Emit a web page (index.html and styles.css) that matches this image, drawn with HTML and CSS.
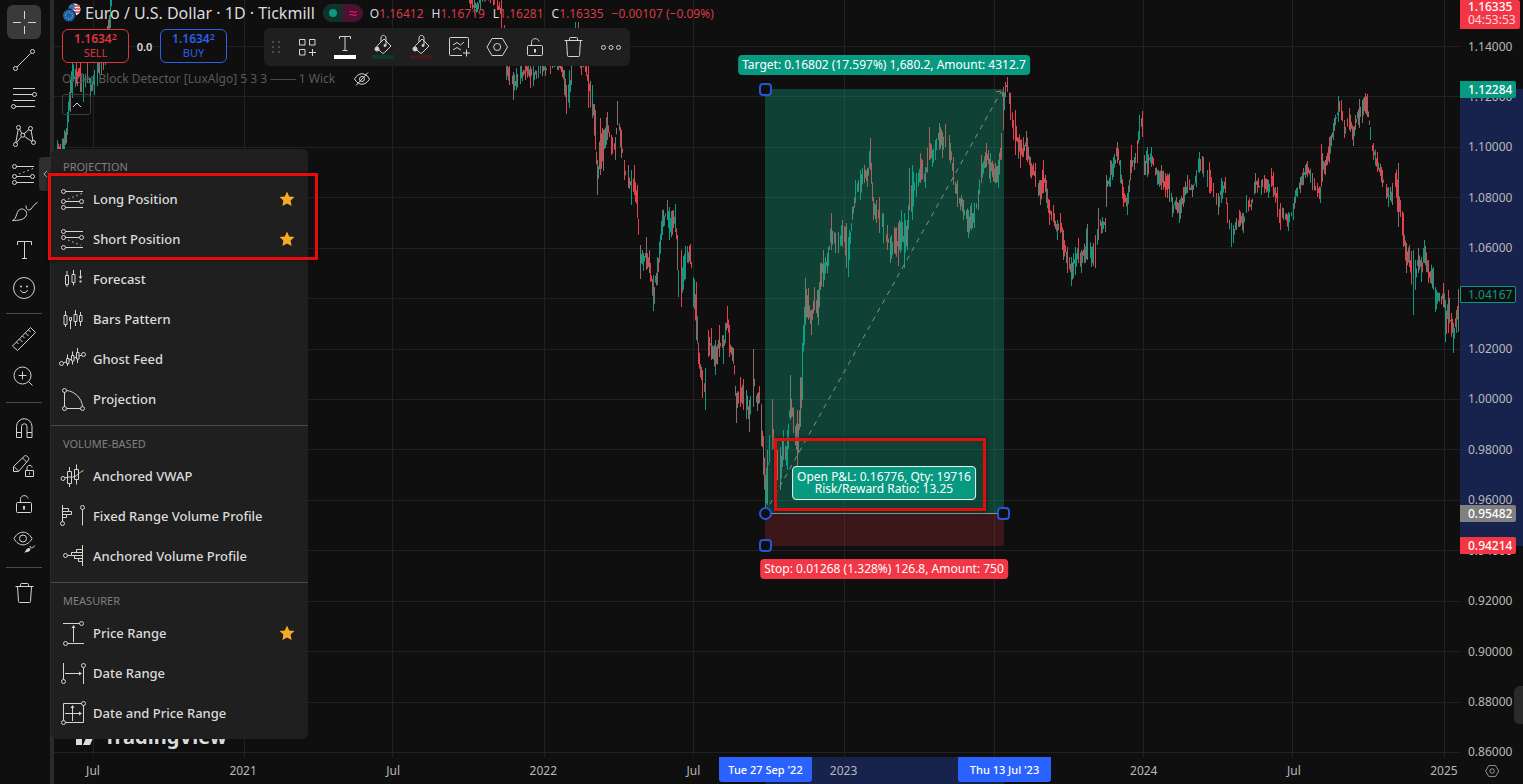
FILE: index.html
```html
<!DOCTYPE html>
<html lang="en">
<head>
  <meta charset="UTF-8" />
  <meta name="viewport" content="width=device-width, initial-scale=1.0"/>
  <title>Euro / U.S. Dollar</title>
  <link rel="stylesheet" href="styles.css">
</head>
<body>
  <nav class="toolbar">
    <button class="tool active" aria-label="Cross">
      <svg class="icon" viewBox="0 0 28 28"><path d="M14.5 3v8M14.5 18v8M3 14.5h8M18 14.5h8"/></svg>
    </button>
    <button class="tool" aria-label="Trend line">
      <svg class="icon" viewBox="0 0 28 28"><path d="M6.9 21.1 20.6 7.4"/><circle cx="5.5" cy="22.5" r="2"/><circle cx="22.5" cy="5.5" r="2"/></svg>
    </button>
    <button class="tool" aria-label="Fib retracement">
      <svg class="icon" viewBox="0 0 28 28"><path d="M3 4.5h22M3 10.5h19.500M3 16.500h22M5.500 22.500h19.500"/><circle cx="24.500" cy="10.500" r="2"/><circle cx="3.500" cy="22.500" r="2"/></svg>
    </button>
    <button class="tool" aria-label="Patterns">
      <svg class="icon" viewBox="0 0 28 28"><path d="M5.800 20.500 8.200 7.500M9.500 7 11.800 11.500M14 11.800 19 7.500M21 8l2 11M22 19.500 14.500 14.500M11.300 14.700 6.500 20.800"/><circle cx="8.500" cy="5.500" r="2"/><circle cx="20.500" cy="6.500" r="2"/><circle cx="12.800" cy="13.200" r="2"/><circle cx="5.500" cy="22.500" r="2"/><circle cx="23.500" cy="20.500" r="2"/></svg>
    </button>
    <button class="tool open" aria-label="Prediction and measurement tools">
      <svg class="icon"><use href="#long"/></svg>
      <span class="tool-arrow"><svg class="arrow" viewBox="0 0 6 10"><path d="M5 1 1 5l4 4"/></svg></span>
    </button>
    <button class="tool" aria-label="Brush">
      <svg class="icon" viewBox="0 0 28 28"><path d="M2.500 22.500c5-1.500 3-10 8.500-11.500 4-.5 7 3.500 5 7-2 4-8 4.500-13.500 4.500z"/><path d="M16 7.500c0 4.500 2.500 5.500 5 3.500 2-2 3-5 6.500-6.500"/></svg>
    </button>
    <button class="tool" aria-label="Text">
      <svg class="icon" viewBox="0 0 28 28"><path d="M7.500 9V5.500h14V9M14.500 5.500v17M12 22.500h5"/></svg>
    </button>
    <button class="tool" aria-label="Icons">
      <svg class="icon" viewBox="0 0 28 28"><circle cx="14" cy="14" r="10.500"/><path d="M10.500 16c1 3.500 6 3.500 7 0"/><circle class="dot" cx="11" cy="12.500" r="1"/><circle class="dot" cx="17" cy="12.500" r="1"/></svg>
    </button>
    <hr>
    <button class="tool" aria-label="Measure">
      <svg class="icon" viewBox="0 0 28 28"><path d="M2.500 21 20.500 2.500 25.500 7.500 7.500 25.500zM6.500 17l2 2M9.500 14l3 3M12.500 11l2 2M15.500 8l3 3M18.500 5l2 2"/></svg>
    </button>
    <button class="tool" aria-label="Zoom in">
      <svg class="icon" viewBox="0 0 28 28"><circle cx="12.500" cy="12.500" r="8.500"/><path d="M12.500 8.500v8M8.500 12.500h8M18.500 18.500l4 4"/></svg>
    </button>
    <hr>
    <button class="tool" aria-label="Magnet">
      <svg class="icon" viewBox="0 0 28 28"><path d="M6.500 23.500v-11a7.700 7.700 0 0 1 15.500 0v11h-5v-11a2.700 2.700 0 0 0-5.500 0v11zM6.500 18.500h5M17 18.500h5"/></svg>
    </button>
    <button class="tool" aria-label="Drawing mode">
      <svg class="icon" viewBox="0 0 28 28"><path d="M3.500 19.500v-5L14.500 4c1.500-1.500 5.500 2 4 4L8.500 19.500zM4 14.500l4.500 4.500M12.500 6l4 4"/><path d="M15.500 18.500h8v6h-8zM17 18.500V16c0-3.500 5-3.500 5-.5M19.500 20.500v2"/></svg>
    </button>
    <button class="tool" aria-label="Lock">
      <svg class="icon"><use href="#lock"/></svg>
    </button>
    <button class="tool" aria-label="Hide drawings">
      <svg class="icon" viewBox="0 0 28 28"><path d="M4 10.500c4.500-8.500 13.500-8.500 18 0-4.500 8.500-13.500 8.500-18 0z"/><circle cx="13" cy="10.500" r="3.500"/><path class="filled" d="M14 24.500c2-1 2-4.500 5-4.500 2.500.5 2 4.500-5 4.500z"/><path d="M20 18c0 3.500 3.500 1.500 5-.5"/></svg>
    </button>
    <hr>
    <button class="tool" aria-label="Remove">
      <svg class="icon"><use href="#trash"/></svg>
    </button>
  </nav>

  <main class="chart">
    <div class="plot">
      <svg class="candles" id="candles" viewBox="54 0 1406 757" preserveAspectRatio="none">
        <g id="grid"></g>
        <g id="bars"></g>
        <rect class="profit" x="765" y="89" width="239" height="424"/>
        <rect class="loss" x="765" y="514" width="239" height="32"/>
        <path class="entry" d="M765 513.500h239"/>
        <path class="trend" d="M765 513 1001 92M1001 91l-6 1M1002 92l1 5"/>
        <g class="handles">
          <rect x="760" y="84" width="11" height="11" rx="3"/>
          <circle cx="765.500" cy="513.500" r="5.500"/>
          <rect x="998" y="508" width="11" height="11" rx="3"/>
          <rect x="760" y="540" width="11" height="11" rx="3"/>
        </g>
      </svg>

      <span class="label target">Target: 0.16802 (17.597%) 1,680.2, Amount: 4312.7</span>
      <span class="label pnl">Open P&amp;L: 0.16776, Qty: 19716<br>Risk/Reward Ratio: 13.25</span>
      <span class="label stop">Stop: 0.01268 (1.328%) 126.8, Amount: 750</span>
      <div class="mark mark-ratio"></div>

      <div class="watermark">
        <svg width="28" height="18" viewBox="0 0 28 18"><path d="M0 1h12v16H6V7H0zM20 1h7l-7 16h-7z"/><circle cx="15.500" cy="4" r="3"/></svg>
        TradingView
      </div>

      <header class="legend">
        <div class="symbol-row">
          <svg class="flags" viewBox="0 0 20 20">
            <circle cx="12.500" cy="6.500" r="6" fill="#e8e8e8"/>
            <path d="M12 3h6M12 6h7M12 9h6" stroke="#d8434c" stroke-width="1.500"/>
            <path d="M6.500 6.500A6 6 0 0 1 12.500.5v6z" fill="#2f6fb5"/>
            <circle cx="7" cy="12.500" r="6.500" fill="#1b5faa" stroke="#0f0f0f"/>
            <circle cx="7" cy="12.500" r="3.500" fill="none" stroke="#d3d9a0" stroke-dasharray="1 1.700"/>
          </svg>
          <h1>Euro / U.S. Dollar · 1D · Tickmill</h1>
          <span class="status"><i class="online"></i><i class="wave">≈</i></span>
          <span class="ohlc"><span>O<b>1.16412</b></span><span>H<b>1.16719</b></span><span>L<b>1.16281</b></span><span>C<b>1.16335</b></span><b>−0.00107 (−0.09%)</b></span>
        </div>
        <div class="trade-row">
          <button class="trade sell"><strong>1.1634<sup>2</sup></strong>SELL</button>
          <span class="spread">0.0</span>
          <button class="trade buy"><strong>1.1634<sup>2</sup></strong>BUY</button>
        </div>
        <div class="study-row">
          Order Block Detector [LuxAlgo] 5 3 3 ─── 1 Wick
          <svg class="eye" viewBox="0 0 18 16"><path d="M1.500 8c4-7 11-7 15 0-4 7-11 7-15 0zM3 14.500 15 1.500"/><circle cx="9" cy="8" r="2.500"/></svg>
        </div>
        <button class="collapse" aria-label="Collapse legend"><svg class="arrow" viewBox="0 0 10 6"><path d="M1 5l4-4 4 4"/></svg></button>
      </header>

      <div class="floatbar">
        <svg class="grip" viewBox="0 0 10 14"><path d="M1 1h2v2H1zM7 1h2v2H7zM1 6h2v2H1zM7 6h2v2H7zM1 11h2v2H1zM7 11h2v2H7z"/></svg>
        <button aria-label="Templates"><svg class="icon" viewBox="0 0 28 28"><path d="M6.500 6.500h5.500v5.500H6.500zM16.500 6.500h5.500v5.500h-5.500zM6.500 16.500h5.500v5.500H6.500zM19.500 16v7M16 19.500h7"/></svg></button>
        <button aria-label="Text colour"><svg class="icon" viewBox="0 0 28 28"><path d="M8.500 6V3.500h11V6M14 3.500v14M11.500 17.500h5"/><path class="swatch" d="M3 22h22v4H3z"/></svg></button>
        <button aria-label="Target colour"><svg class="icon" viewBox="0 0 28 28"><use href="#bucket"/><path d="M3 24h22" stroke="#0b3a33" stroke-width="4"/></svg></button>
        <button aria-label="Stop colour"><svg class="icon" viewBox="0 0 28 28"><use href="#bucket"/><path d="M3 24h22" stroke="#43191e" stroke-width="4"/></svg></button>
        <button aria-label="Create limit order"><svg class="icon" viewBox="0 0 28 28"><path d="M17 22.500H5.500a1 1 0 0 1-1-1v-16a1 1 0 0 1 1-1h17a1 1 0 0 1 1 1V15M8 12l4-2.500 3.500 2.500L19 9M8 17l4-2.500 4 2.500M21.500 16.500v7M18 20h7"/></svg></button>
        <button aria-label="Settings"><svg class="icon"><use href="#hexagon"/></svg></button>
        <button aria-label="Lock"><svg class="icon"><use href="#lock"/></svg></button>
        <button aria-label="Remove"><svg class="icon"><use href="#trash"/></svg></button>
        <button aria-label="More"><svg class="icon" viewBox="0 0 28 28"><circle cx="6.500" cy="14.500" r="2"/><circle cx="14" cy="14.500" r="2"/><circle cx="21.500" cy="14.500" r="2"/></svg></button>
      </div>
    </div>

    <aside class="price-axis">
      <div class="price-range"></div>
      <div class="prices">
        <span>1.14000</span><span>1.12000</span><span>1.10000</span><span>1.08000</span><span>1.06000</span>
        <span></span><span>1.02000</span><span>1.00000</span><span>0.98000</span><span>0.96000</span>
        <span>0.94000</span><span>0.92000</span><span>0.90000</span><span>0.88000</span><span>0.86000</span>
      </div>
      <span class="tag last">1.16335<br><small>04:53:53</small></span>
      <span class="tag high">1.12284</span>
      <span class="tag current">1.04167</span>
      <span class="tag open-price">0.95482</span>
      <span class="tag low">0.94214</span>
      <span class="side-handle"></span>
    </aside>

    <footer class="time-axis">
      <div class="date-range"></div>
      <div class="dates">
        <span>Jul</span><span>2021</span><span>Jul</span><span>2022</span><span>Jul</span>
        <span>2023</span><span></span><span>2024</span><span>Jul</span><span>2025</span>
      </div>
      <span class="date-tag from">Tue 27 Sep '22</span>
      <span class="date-tag to">Thu 13 Jul '23</span>
    </footer>
    <button class="axis-settings" aria-label="Axis settings"><svg width="18" height="18"><use href="#hexagon"/></svg></button>
  </main>

  <div class="menu">
    <section>
      <h2>PROJECTION</h2>
      <button class="item"><svg class="icon"><use href="#long"/></svg>Long Position<svg class="star"><use href="#star"/></svg></button>
      <button class="item"><svg class="icon" viewBox="0 0 28 28"><path d="M6.500 6.500H24M6.500 12.500h14M6.500 22.500H24"/><path stroke-dasharray="1.500 3" d="M9 15l13 5.500"/><circle cx="4.500" cy="6.500" r="2"/><circle cx="4.500" cy="12.500" r="2"/><circle cx="22.500" cy="12.500" r="2"/><circle cx="4.500" cy="22.500" r="2"/></svg>Short Position<svg class="star"><use href="#star"/></svg></button>
      <button class="item"><svg class="icon" viewBox="0 0 28 28"><path d="M6.500 10.500h3v9h-3zM8 6v4.500M8 19.500V22M13 9.500h3v8h-3zM14.500 5v4.500M14.500 17.500v3M21.500 5v8"/><path class="filled" d="M19.500 11.500h4l-2 2.500zM20.500 15.500h2v2h-2z"/></svg>Forecast</button>
      <button class="item"><svg class="icon" viewBox="0 0 28 28"><path d="M5 10.500h3v9H5zM6.500 6v4.500M6.500 19.500V22M10.500 12.500h2v3h-2zM11.500 15.500V24M15 9.500h3v7h-3zM16.500 5v4.500M16.500 16.500V21M20.500 10.500h2.500v6h-2.500zM21.500 7v3.500M21.500 16.500V21"/></svg>Bars Pattern</button>
      <button class="item"><svg class="icon" viewBox="0 0 28 28"><path d="M7.500 13.500h2.500v5H7.500zM8.500 9.500v4M8.500 18.500V21M12.500 10.500H15v5.500h-2.500zM13.500 6.500v4M13.500 16v3.500M17.500 7.500H20v6.500h-2.500zM18.500 3v4.500M18.500 14v4M4.500 18l3-1.500M10 15l2.500-1M15 13l2.500-1M20 11l3-1"/><circle cx="2.500" cy="18.500" r="2"/><circle cx="24.500" cy="9.500" r="2"/></svg>Ghost Feed</button>
      <button class="item"><svg class="icon" viewBox="0 0 28 28"><path d="M5.500 7.500v14M7.500 23.500h14M7.500 5.500c8 .5 15.500 8 16 16"/><circle cx="5.500" cy="5.500" r="2"/><circle cx="5.500" cy="23.500" r="2"/><circle cx="23.500" cy="23.500" r="2"/></svg>Projection</button>
    </section>
    <section>
      <h2>VOLUME-BASED</h2>
      <button class="item"><svg class="icon" viewBox="0 0 28 28"><path d="M8.500 9.500h4v12h-4zM10.500 5v4.500M10.500 21.500V25M15.500 7.500h4v10h-4zM17.500 2.500v5M17.500 17.500v5M6 16c3-2 7 0 10-1.500s3.500-3.500 8.500-6"/><circle cx="4" cy="16.500" r="2"/></svg>Anchored VWAP</button>
      <button class="item"><svg class="icon" viewBox="0 0 28 28"><path d="M3.500 3v16.500M3.500 6.500h6v3h3v3h-5v3h-4M3.500 9.500h6M3.500 12.500h4M23.500 7.500v16"/><circle cx="3.500" cy="21.500" r="2"/><circle cx="23.500" cy="5.500" r="2"/></svg>Fixed Range Volume Profile</button>
      <button class="item"><svg class="icon" viewBox="0 0 28 28"><path d="M23.500 3v21M23.500 7.500h-6v3h-5v3h-4M12.500 13.500h11M12.500 10.500h11M23.500 19.500h-4v-3h-4v-3M15.500 16.500h8"/><circle cx="6.500" cy="13.500" r="2"/></svg>Anchored Volume Profile</button>
    </section>
    <section>
      <h2>MEASURER</h2>
      <button class="item"><svg class="icon" viewBox="0 0 28 28"><path d="M4 4.500h16.500M8.500 24.500H25M14.500 23V7"/><path class="filled" d="M12.500 9h4l-2-3z"/><circle cx="22.500" cy="4.500" r="2"/><circle cx="6.500" cy="24.500" r="2"/></svg>Price Range<svg class="star"><use href="#star"/></svg></button>
      <button class="item"><svg class="icon" viewBox="0 0 28 28"><path d="M4.500 4v16.500M24.500 8.500V25M6 14.500h14"/><path class="filled" d="M20 12.500v4l3-2z"/><circle cx="4.500" cy="22.500" r="2"/><circle cx="24.500" cy="6.500" r="2"/></svg>Date Range</button>
      <button class="item"><svg class="icon" viewBox="0 0 28 28"><path d="M22.500 4.500h-18v17M6.500 23.500h18v-17M13.500 22V8M6 14.500h14"/><path class="filled" d="M11.500 9h4l-2-3zM20 12.500v4l3-2z"/><circle cx="24.500" cy="4.500" r="2"/><circle cx="4.500" cy="23.500" r="2"/></svg>Date and Price Range</button>
    </section>
    <div class="mark mark-positions"></div>
  </div>

  <svg class="sprite">
    <symbol id="long" viewBox="0 0 28 28"><path d="M6.500 6.500H24M6.500 16.500h14M6.500 22.500H24"/><path stroke-dasharray="1.500 3" d="M9 14l14-5.500"/><circle cx="4.500" cy="6.500" r="2"/><circle cx="4.500" cy="16.500" r="2"/><circle cx="22.500" cy="16.500" r="2"/><circle cx="4.500" cy="22.500" r="2"/></symbol>
    <symbol id="lock" viewBox="0 0 28 28"><path d="M7.500 12.500h13a1 1 0 0 1 1 1v8a1 1 0 0 1-1 1h-13a1 1 0 0 1-1-1v-8a1 1 0 0 1 1-1zM10.500 12.500V9.500c0-5 7-5 7.500-1"/><path stroke-width="2" d="M14 16v3.500"/></symbol>
    <symbol id="trash" viewBox="0 0 28 28"><path d="M5.500 7.500h18M10.500 7.500v-2a1 1 0 0 1 1-1h6a1 1 0 0 1 1 1v2M7.500 7.500l1 15a1 1 0 0 0 1 1h10a1 1 0 0 0 1-1l1-15"/></symbol>
    <symbol id="hexagon" viewBox="0 0 28 28"><path d="M9 5.500h10.500l5 8.500-5 8.500H9L4 14z"/><circle cx="14.200" cy="14" r="3.500"/></symbol>
    <symbol id="bucket" viewBox="0 0 28 28"><path d="M8.500 12.500 15 6l7 7-6.500 6.500c-1 1-2 1-3 0L8.500 15.500M12 9V5c0-3.500 5-3.500 5 0v7M8.500 12.500l-1 2"/><circle class="dot" cx="8" cy="16" r="2"/><circle class="dot" cx="16" cy="12.500" r="1"/></symbol>
    <symbol id="star" viewBox="0 0 16 16"><path d="M8 .5l2.200 4.900 5.300.6-3.900 3.600 1 5.400L8 12.400 3.400 15l1-5.400L.5 6l5.300-.6z"/></symbol>
  </svg>

  <script src="script.js"></script>
</body>
</html>
```
FILE: styles.css
```css
* {
  box-sizing: border-box;
}
body {
  margin: 0;
  height: 100vh;
  display: flex;
  overflow: hidden;
  position: relative;
  background: #0f0f0f;
  color: #dbdbdb;
  font-family: "Noto Sans", "Open Sans", sans-serif;
  font-size: 12px;
}
button {
  font: inherit;
  color: inherit;
  background: none;
  border: none;
  padding: 0;
  cursor: pointer;
}
svg {
  display: block;
}
.icon {
  width: 28px;
  height: 28px;
  flex: none;
}
.icon, .arrow, .eye, .axis-settings svg {
  fill: none;
  stroke: #d4d4d4;
}
.icon .dot, .icon .filled {
  fill: #d4d4d4;
  stroke: none;
}
#bucket .dot {
  fill: #d4d4d4;
}
.sprite {
  display: none;
}

/* left toolbar */
.toolbar {
  flex: none;
  display: flex;
  flex-direction: column;
  width: 54px;
  padding-top: 3px;
  border-right: 4px solid #2b2b2b;
}
.tool {
  position: relative;
  flex: none;
  display: flex;
  align-items: center;
  justify-content: center;
  width: 34px;
  height: 34px;
  margin: 2px 7px;
  border-radius: 6px;
}
.tool.active {
  background: #3a3a3a;
}
.tool-arrow {
  position: absolute;
  left: 32px;
  top: 0;
  width: 12px;
  height: 34px;
  display: flex;
  align-items: center;
  justify-content: center;
  background: #2e2e2e;
  border-radius: 4px 0 0 4px;
}
.tool-arrow .arrow {
  width: 5px;
  height: 8px;
}
.toolbar hr {
  width: 36px;
  margin: 6px;
  border: 0;
  border-top: 1px solid #4a4a4a;
}

/* chart */
.chart {
  flex: 1;
  display: grid;
  grid-template-columns: 1fr 63px;
  grid-template-rows: 1fr 27px;
  min-width: 0;
}
.plot {
  position: relative;
  min-height: 0;
  overflow: hidden;
}
.candles {
  position: absolute;
  width: 100%;
  height: 100%;
}
#grid path {
  stroke: #212121;
}
.profit {
  fill: #10b08c;
  fill-opacity: 0.31;
}
.loss {
  fill: #f23645;
  fill-opacity: 0.2;
}
.entry {
  stroke: #8a9a96;
}
.trend {
  fill: none;
  stroke: #7f918b;
  stroke-dasharray: 5 5;
}
.handles {
  fill: #0f0f0f;
  stroke: #2457d6;
  stroke-width: 2;
}
.label {
  position: absolute;
  transform: translateX(-50%);
  padding: 2px 4px;
  border-radius: 4px;
  color: #fff;
  font-size: 12px;
  line-height: 16px;
  text-align: center;
  white-space: nowrap;
}
.target {
  left: 830px;
  top: 55px;
  background: #089981;
}
.pnl {
  left: 830px;
  top: 466px;
  padding: 4px;
  border: 1px solid #e8f5f2;
  background: #089981;
  line-height: 12px;
}
.stop {
  left: 830px;
  top: 559px;
  background: #f23645;
}
.mark {
  position: absolute;
  border: 3px solid #e60c0c;
  box-shadow: 0 0 4px rgba(0,0,0,0.6);
  pointer-events: none;
}
.mark-ratio {
  left: 720px;
  top: 438px;
  width: 212px;
  height: 73px;
}
.watermark {
  position: absolute;
  left: 16px;
  bottom: 6px;
  display: flex;
  align-items: center;
  gap: 6px;
  font: bold 20px/28px "Noto Sans", sans-serif;
}
.watermark svg {
  fill: #dbdbdb;
}

/* legend */
.legend {
  position: relative;
  padding-left: 8px;
}
.symbol-row {
  display: flex;
  align-items: center;
  height: 26px;
}
.flags {
  width: 20px;
  height: 20px;
}
h1 {
  margin: 0 8px 0 3px;
  font-size: 16px;
  font-weight: 400;
  white-space: nowrap;
}
.status {
  display: flex;
  width: 40px;
  height: 18px;
  border-radius: 9px;
  overflow: hidden;
  background: #4a1230;
}
.status i {
  flex: 1;
  display: flex;
  align-items: center;
  justify-content: center;
  font-style: normal;
}
.online {
  background: #12312b;
}
.online::before {
  content: "";
  width: 8px;
  height: 8px;
  border-radius: 50%;
  background: #089981;
}
.wave {
  color: #d81b60;
  font-size: 16px;
  line-height: 18px;
}
.ohlc {
  display: flex;
  gap: 8px;
  margin-left: 7px;
  font-size: 12px;
  white-space: nowrap;
}
.ohlc b {
  color: #d83a46;
  font-weight: 400;
}
.trade-row {
  display: flex;
  align-items: center;
  margin-top: 3px;
}
.trade {
  width: 67px;
  height: 34px;
  border: 1px solid;
  border-radius: 6px;
  background: #0f0f0f;
  font-size: 11px;
  line-height: 14px;
}
.trade strong {
  display: block;
  font-size: 12px;
  font-weight: 600;
}
.trade sup {
  font-size: 9px;
  line-height: 0;
  vertical-align: 3px;
}
.sell {
  color: #e03440;
}
.buy {
  color: #2d5fe8;
}
.spread {
  width: 31px;
  text-align: center;
  font-size: 11px;
  font-weight: 600;
}
.study-row {
  display: flex;
  align-items: center;
  gap: 18px;
  height: 31px;
  color: #5a5a5a;
}
.eye {
  width: 18px;
  height: 16px;
}
.collapse {
  display: flex;
  align-items: center;
  justify-content: center;
  width: 29px;
  height: 21px;
  border: 1px solid #3d3d3d;
  border-radius: 3px;
}
.collapse .arrow {
  width: 10px;
  height: 6px;
}
.floatbar {
  position: absolute;
  left: 210px;
  top: 28px;
  display: flex;
  align-items: center;
  height: 38px;
  padding-left: 7px;
  border-radius: 6px;
  background: #1f1f1f;
}
.floatbar button {
  width: 38px;
  display: flex;
  justify-content: center;
}
.floatbar .swatch {
  fill: #fff;
  stroke: none;
}
.grip {
  width: 10px;
  height: 14px;
  margin-right: 7px;
  fill: #4a4a4a;
}

/* axes */
.price-axis {
  position: relative;
}
.prices {
  position: relative;
  height: 100%;
  padding: 46px 0 5px 8px;
  display: flex;
  flex-direction: column;
  justify-content: space-between;
}
.prices span {
  display: flex;
  align-items: center;
  height: 0;
  color: #b8b8b8;
}
.price-range {
  position: absolute;
  top: 89px;
  width: 100%;
  height: 457px;
  background: #17234d;
}
.tag {
  position: absolute;
  left: 0;
  width: 56px;
  padding-left: 8px;
  border-radius: 0 2px 2px 0;
  color: #fff;
  font-weight: 500;
  line-height: 17px;
}
.last {
  top: 0;
  width: 60px;
  height: 29px;
  line-height: 13px;
  background: #f23645;
}
.last small {
  font-size: 12px;
  font-weight: 400;
  opacity: 0.8;
}
.high {
  top: 81px;
  background: #089981;
}
.current {
  top: 286px;
  padding-left: 7px;
  border: 1px solid #089981;
  background: #0f0f0f;
  color: #089981;
  font-weight: 400;
  line-height: 15px;
}
.open-price {
  top: 505px;
  background: #808080;
}
.low {
  top: 537px;
  background: #f23645;
}
.side-handle {
  position: absolute;
  right: 0;
  top: 686px;
  width: 9px;
  height: 38px;
  border-radius: 6px 0 0 6px;
  background: #2a2a2a;
}
.time-axis {
  position: relative;
}
.dates {
  position: relative;
  height: 100%;
  padding: 0 16px 0 39px;
  display: flex;
  align-items: center;
  justify-content: space-between;
}
.dates span {
  display: flex;
  justify-content: center;
  width: 0;
  color: #b8b8b8;
}
.date-range {
  position: absolute;
  left: 711px;
  width: 239px;
  height: 100%;
  background: #17234d;
}
.date-tag {
  position: absolute;
  top: 0;
  width: 93px;
  border-radius: 0 0 3px 3px;
  background: #2962ff;
  color: #fff;
  font-size: 11px;
  font-weight: 500;
  line-height: 24px;
  padding-top: 1px;
  text-align: center;
}
.from {
  left: 665px;
}
.to {
  left: 904px;
}
.axis-settings {
  display: flex;
  align-items: center;
  justify-content: center;
}

/* tools menu */
.menu {
  position: absolute;
  left: 51px;
  top: 149px;
  width: 257px;
  border-radius: 6px;
  background: #1f1f1f;
}
.menu section {
  padding: 6px 0;
}
.menu section + section {
  border-top: 1px solid #4a4a4a;
}
.menu h2 {
  margin: 0;
  padding-left: 12px;
  color: #808080;
  font-size: 11px;
  font-weight: 400;
  line-height: 24px;
}
.item {
  display: flex;
  align-items: center;
  gap: 6px;
  width: 100%;
  height: 40px;
  padding: 0 13px 0 8px;
  font-size: 13px;
  font-weight: 500;
  text-align: left;
}
.star {
  width: 16px;
  height: 16px;
  margin-left: auto;
  fill: #f7a928;
}
.mark-positions {
  left: -3px;
  top: 24px;
  width: 270px;
  height: 87px;
}
```
FILE: script.js
```js
// [x, highest, lowest] along the price series
const range = [
  [57,140,155],[60,144,158],[64,130,160],[67,112,135],[70,80,112],[72,62,98],[76,60,84],[80,62,92],[83,74,102],[87,60,82],[90,78,98],[94,70,95],[97,60,86],[101,50,75],[105,30,65],[110,0,28],[112,-20,0],
  [466,-20,-5],[470,-5,8],[474,0,14],[480,-5,10],[490,-8,3],[497,-5,10],[501,0,30],[504,25,60],[506,55,80],[509,66,85],[513,72,100],[516,68,90],[520,64,84],[525,60,80],[530,62,88],[533,65,86],[538,60,78],[545,62,76],[550,60,74],[558,60,70],[561,62,72],[564,70,95],[566,85,114],[569,70,108],[571,60,85],[575,22,66],[578,22,60],[581,50,75],[585,60,72],[588,66,108],[592,85,118],[595,110,150],[597,160,195],[600,118,175],[603,130,171],[607,112,140],[611,135,155],[615,137,160],[617,101,125],[621,130,158],[624,160,180],[628,165,188],[631,170,205],[634,165,195],[637,185,218],[640,245,279],[646,237,270],[649,250,273],[653,275,311],[657,257,285],[662,210,235],[667,200,220],[669,207,240],[675,204,232],[677,235,270],[678,270,297],[681,250,307],[685,246,279],[690,244,264],[693,277,307],[696,282,340],[698,343,364],[702,370,398],[705,368,410],[708,330,357],[711,328,360],[715,340,375],[719,325,357],[723,335,364],[727,306,328],[729,325,357],[733,348,364],[736,393,423],[740,377,407],[743,379,410],[749,400,432],[753,349,407],[757,393,411],[759,386,403],[761,404,446],[763,436,475],[765,475,508],
  [767,450,505],[769,435,463],[772,399,450],[774,440,470],[777,450,480],[780,447,490],[783,430,460],[787,430,470],[790,375,420],[793,407,433],[797,410,467],[800,377,427],[802,343,400],[804,307,345],[805,278,325],[808,288,320],[811,310,335],[814,287,310],[818,290,325],[820,263,290],[823,250,287],[827,253,273],[831,213,250],[835,233,253],[838,232,253],[842,220,247],[846,223,268],[848,237,277],[852,207,220],[855,180,203],[860,170,200],[864,165,183],[867,168,187],[870,138,170],[873,197,220],[876,200,223],[879,197,233],[883,213,243],[887,225,250],[890,237,263],[894,227,253],[898,223,266],[901,210,250],[904,213,268],[907,220,250],[909,168,210],[912,165,220],[916,173,197],[920,153,183],[925,167,188],[929,127,160],[932,150,167],[935,140,160],[939,123,150],[942,132,158],[945,124,147],[949,135,160],[953,157,185],[957,180,207],[963,200,220],[968,210,238],[971,203,230],[974,203,228],[978,190,210],[981,155,183],[986,143,167],[990,153,183],[995,163,183],[998,160,188],[1001,133,160],[1003,87,130],[1005,82,97],[1007,77,92],
  [1010,93,120],[1013,120,140],[1015,110,155],[1020,140,168],[1023,137,157],[1026,131,160],[1030,157,177],[1035,163,187],[1040,180,205],[1043,160,193],[1046,180,203],[1049,200,225],[1053,205,222],[1057,220,240],[1060,213,233],[1063,230,260],[1067,247,273],[1071,257,286],[1075,247,275],[1078,238,263],[1081,250,273],[1087,224,260],[1091,247,267],[1095,235,268],[1098,208,240],[1102,217,233],[1105,218,232],[1106,175,207],[1110,160,187],[1113,157,177],[1117,142,163],[1120,160,183],[1123,187,207],[1127,193,215],[1131,145,173],[1134,157,170],[1137,140,163],[1139,115,140],[1142,111,137],[1144,155,175],[1147,147,177],[1151,147,167],[1157,170,185],[1161,165,190],[1165,173,197],[1169,173,202],[1172,197,217],[1176,197,210],[1179,200,223],[1183,187,207],[1187,175,193],[1192,185,197],[1196,170,187],[1199,152,173],[1203,157,177],[1207,170,187],[1209,162,193],[1213,183,197],[1218,193,215],[1221,178,203],[1225,177,193],[1227,203,223],[1231,223,247],
  [1233,225,243],[1236,218,230],[1239,210,227],[1243,213,233],[1246,195,213],[1251,200,210],[1255,173,193],[1261,180,195],[1264,175,193],[1268,180,198],[1271,168,187],[1273,172,197],[1277,187,217],[1280,203,230],[1283,208,220],[1288,212,231],[1293,203,220],[1295,190,203],[1300,177,193],[1303,168,185],[1307,161,177],[1312,173,190],[1317,183,197],[1320,187,203],[1321,144,187],[1325,160,175],[1329,137,163],[1333,123,140],[1338,96,122],[1341,100,120],[1344,120,138],[1349,108,130],[1353,127,146],[1355,115,130],[1359,99,128],[1362,100,123],[1365,93,113],[1367,94,117],[1370,127,140],[1373,143,160],[1377,152,172],[1382,170,187],[1388,187,207],[1392,183,205],[1395,173,187],[1398,163,227],[1400,200,217],[1403,213,247],[1406,243,273],[1409,245,267],[1413,250,315],[1415,260,290],[1418,248,273],[1421,257,282],[1424,240,263],[1428,260,283],[1433,267,290],[1435,287,312],[1439,293,302],[1443,283,307],[1445,300,342],[1448,290,333],[1451,313,337],[1453,323,353],[1456,310,333],[1459,289,332]
];

const dateLines = [93, 244, 392, 544, 693, 844, 994, 1143, 1292, 1444];

// grid
let grid = "";
for (let i = 0; i < 15; i++) {
  grid += `M54 ${Math.round(46 + i * 50.43) + 0.5}H1460`;
}
dateLines.forEach(x => {
  grid += `M${x + 0.5} 0V757`;
});
document.getElementById("grid").innerHTML = `<path d="${grid}"/>`;

// small repeatable random generator
let seed = 11;
function random() {
  seed = (seed * 16807) % 2147483647;
  return seed / 2147483647;
}

const paths = { "#e5404b": "", "#0c9a82": "", "#84706b": "" };

function addBar(x, top, bottom, slope) {
  const r = random();
  let color = "#84706b";
  if (r > 0.4) {
    color = slope > 0 ? "#e5404b" : "#0c9a82";
  } else if (r < 0.12) {
    color = slope > 0 ? "#0c9a82" : "#e5404b";
  }
  paths[color] += `M${x + 0.5} ${top.toFixed(1)}V${bottom.toFixed(1)}`;
}

for (let i = 0; i < range.length - 1; i++) {
  const [x1, top1, low1] = range[i];
  const [x2, top2, low2] = range[i + 1];
  if (x2 - x1 > 50) continue;
  const slope = top2 + low2 - top1 - low1;
  addBar(x1, top1, low1, slope);
  for (let x = x1 + 1; x < x2; x++) {
    // leave some gaps so single bars stay visible
    if (random() < 0.22) continue;
    const t = (x - x1) / (x2 - x1);
    const top = top1 + (top2 - top1) * t;
    const low = low1 + (low2 - low1) * t;
    const size = low - top;
    addBar(x, top + size * random() * 0.5, low - size * random() * 0.5, slope);
  }
}
addBar(1458, 289, 332, -1);

document.getElementById("bars").innerHTML = Object.keys(paths)
  .map(color => `<path stroke="${color}" d="${paths[color]}"/>`)
  .join("");
```
